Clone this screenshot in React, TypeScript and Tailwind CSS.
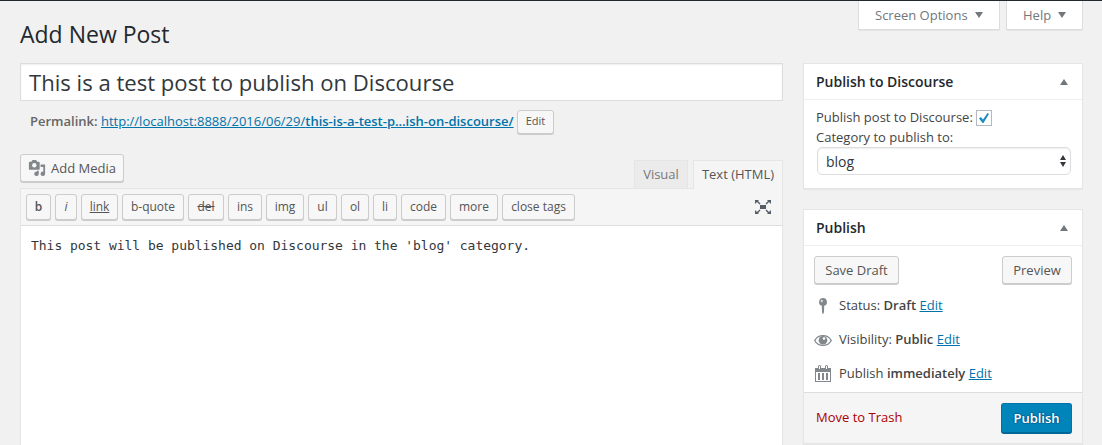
import type { ReactNode } from 'react';

const sans = "font-['Open_Sans','Noto_Sans',sans-serif]";

function Button({ className, children }: { className: string; children: ReactNode }) {
  return (
    <button
      type="button"
      className={`flex shrink-0 items-center justify-center whitespace-nowrap rounded-[3px] border border-[#ccc] bg-[#f7f7f7] text-[#555] shadow-[0_1px_0_#ccc] ${className}`}
    >
      {children}
    </button>
  );
}

const quicktags = [
  { label: 'b', className: 'w-[25px] font-semibold' },
  { label: 'i', className: 'w-[22px] italic' },
  { label: 'link', className: 'w-[37px] underline' },
  { label: 'b-quote', className: 'w-[62px]' },
  { label: 'del', className: 'w-[36px] line-through' },
  { label: 'ins', className: 'w-[34px]' },
  { label: 'img', className: 'w-[38px]' },
  { label: 'ul', className: 'w-[29px]' },
  { label: 'ol', className: 'w-[28px]' },
  { label: 'li', className: 'w-[24px]' },
  { label: 'code', className: 'w-[45px]' },
  { label: 'more', className: 'w-[48px]' },
  { label: 'close tags', className: 'w-[73px]' },
];

function MediaIcon() {
  return (
    <svg width="18" height="18" viewBox="0 0 20 20" fill="#82878c" className="shrink-0">
      <path
        fillRule="evenodd"
        d="M13 11V4c0-.55-.45-1-1-1h-1.670L9 1H5L3.670 3H2c-.55 0-1 .45-1 1v7c0 .55.45 1 1 1h10c.55 0 1-.45 1-1zM7 4.500a2.500 2.500 0 1 1 0 5 2.500 2.500 0 0 1 0-5zM14 6h5v10.500a2.500 2.500 0 1 1-2-2.450V9h-3zM10 14.050V13h2v3.500a2.500 2.500 0 1 1-2-2.450z"
      />
    </svg>
  );
}

function FullscreenIcon() {
  return (
    <svg width="16" height="14" viewBox="0 0 16 14" fill="#555d66" className="shrink-0">
      <path d="M5 5h6v4H5zM0 0h4L3 1l2.500 2.500-1 1L2 2 0 4zM16 0h-4l1 1-2.500 2.500 1 1L14 2l2 2zM0 14h4l-1-1 2.500-2.500-1-1L2 12l-2-2zM16 14h-4l1-1-2.500-2.500 1-1L14 12l2-2z" />
    </svg>
  );
}

function PinIcon() {
  return (
    <svg width="20" height="20" viewBox="0 0 20 20" className="shrink-0">
      <path fill="#82878c" d="M10 2a4 4 0 0 0-1.200 7.800l.2 6.200.7 2h.6l.7-2 .2-6.200A4 4 0 0 0 10 2z" />
      <circle cx="8.800" cy="5" r="1.200" fill="#d5d7d9" />
    </svg>
  );
}

function EyeIcon() {
  return (
    <svg width="20" height="20" viewBox="0 0 20 20" className="shrink-0">
      <path
        d="M1.700 10.500C3.500 7.300 6.500 5.700 10 5.700s6.500 1.600 8.300 4.800c-1.800 3.200-4.800 4.900-8.300 4.900s-6.500-1.700-8.300-4.900z"
        fill="none"
        stroke="#82878c"
        strokeWidth="1.300"
      />
      <circle cx="10" cy="10.200" r="4.300" fill="#82878c" />
      <circle cx="11" cy="8.500" r="1.300" fill="#fff" />
    </svg>
  );
}

function CalendarIcon() {
  return (
    <svg width="20" height="20" viewBox="0 0 20 20" className="shrink-0">
      <path
        fill="#82878c"
        fillRule="evenodd"
        d="M2 4h3V2.500a1.500 1.500 0 0 1 3 0V4h4V2.500a1.500 1.500 0 0 1 3 0V4h3v14H2zM6 2v3h1V2zM13 2v3h1V2zM3 8v9h14V8zM5 9h2v7H5zM9 9h2v7H9zM13 9h2v7h-2z"
      />
    </svg>
  );
}

function ScreenTab({ label, className }: { label: string; className: string }) {
  return (
    <div
      className={`flex h-[29px] items-center whitespace-nowrap border border-t-0 border-[#ddd] bg-white pl-4 text-[13px] text-[#72777c] shadow-[0_1px_1px_-1px_rgba(0,0,0,0.3)] ${className}`}
    >
      <span className="pt-px">{label}</span>
      <svg width="8" height="6" viewBox="0 0 8 6" className="ml-[7px]">
        <path d="M0 0h8L4 6z" fill="#72777c" />
      </svg>
    </div>
  );
}

function PanelHeader({ title }: { title: string }) {
  return (
    <div className="flex h-9 items-center justify-between border-b border-[#eee] pl-3 pr-[14px] text-[14px] font-semibold text-[#23282d]">
      {title}
      <svg width="8" height="6" viewBox="0 0 8 6">
        <path d="M0 6h8L4 0z" fill="#72777c" />
      </svg>
    </div>
  );
}

function StatusRow({ icon, label, value }: { icon: ReactNode; label: string; value: string }) {
  return (
    <div className="flex h-[34px] items-center gap-[6px] pl-[9px]">
      {icon}
      <span className="whitespace-nowrap">
        {label} <b className="font-semibold">{value}</b>{' '}
        <a className="text-[#0073aa] underline">Edit</a>
      </span>
    </div>
  );
}

export default function App() {
  return (
    <div
      className={`${sans} h-[445px] w-[1102px] overflow-hidden border-t border-[#23282d] bg-[#f1f1f1] text-[13px] text-[#444]`}
    >
      <div className="flex h-[62px] justify-between pl-5 pr-[19px]">
        <h1 className="pt-[18px] text-[23px] leading-[30px] text-[#23282d]">Add New Post</h1>
        <div className="flex gap-[6px]">
          <ScreenTab label="Screen Options" className="w-[142px]" />
          <ScreenTab label="Help" className="w-[77px]" />
        </div>
      </div>

      <div className="flex gap-5 pl-5">
        <main className="w-[763px] shrink-0">
          <div className="flex h-[38px] items-center border border-[#ddd] bg-white px-2 pt-px text-[22.1px] text-[#32373c] shadow-[inset_0_1px_2px_rgba(0,0,0,0.07)]">
            This is a test post to publish on Discourse
          </div>

          <div className="flex h-10 items-center pl-[10px] pt-px">
            <span className="w-[487px] shrink-0 whitespace-nowrap">
              <b className="font-semibold text-[#666]">Permalink:</b>{' '}
              <a className="text-[#0073aa] underline">
                http://localhost:8888/2016/06/29/
                <b className="font-semibold">this-is-a-test-p…ish-on-discourse/</b>
              </a>
            </span>
            <Button className="h-6 w-[37px] text-[11px]">Edit</Button>
          </div>

          <div className="flex h-[47px] items-end justify-between">
            <Button className="mb-[6px] h-7 w-[104px] gap-[5px] text-[13px]">
              <MediaIcon />
              <span className="pt-px">Add Media</span>
            </Button>
            <div className="flex items-end gap-[5px]">
              <div className="flex h-7 w-[54px] items-center justify-center border border-b-0 border-[#e5e5e5] bg-[#ebebeb] text-[13px] text-[#777]">
                Visual
              </div>
              <div className="-mb-px flex h-[29px] w-[90px] items-center justify-center whitespace-nowrap border border-b-0 border-[#e5e5e5] bg-[#f5f5f5] text-[13px] text-[#555]">
                Text (HTML)
              </div>
            </div>
          </div>

          <div className="h-[260px] border border-[#e5e5e5] bg-white">
            <div className="flex h-[37px] items-center justify-between border-b border-[#ddd] bg-[#f5f5f5] pl-[5px] pr-[11px]">
              <div className="flex gap-1">
                {quicktags.map((tag) => (
                  <Button key={tag.label} className={`h-[26px] text-[12px] ${tag.className}`}>
                    {tag.label}
                  </Button>
                ))}
              </div>
              <FullscreenIcon />
            </div>
            <div className="whitespace-nowrap px-[10px] pt-[10px] font-['DejaVu_Sans_Mono',monospace] text-[13px] leading-[19px] tracking-[-0.03px] text-[#32373c]">
              This post will be published on Discourse in the 'blog' category.
            </div>
          </div>
        </main>

        <aside className="flex w-[280px] shrink-0 flex-col gap-5">
          <section className="h-[126px] border border-[#e5e5e5] bg-white shadow-[0_1px_1px_rgba(0,0,0,0.04)]">
            <PanelHeader title="Publish to Discourse" />
            <div className="px-3 pt-2">
              <div className="flex h-[19px] items-center gap-[3px]">
                Publish post to Discourse:
                <span className="flex size-4 shrink-0 items-center justify-center border border-[#b4b9be] bg-white">
                  <svg width="12" height="12" viewBox="0 0 12 12">
                    <path d="M1 6.500 3 5l2 2.500L9.500 1 11 2 5.500 11H4.500z" fill="#1e8cbe" />
                  </svg>
                </span>
              </div>
              <div className="h-5 leading-5">Category to publish to:</div>
              <div className="ml-px flex h-7 w-[254px] items-center justify-between rounded-[5px] border border-[#ddd] bg-white pl-2 pr-1 text-[14px] text-[#32373c] shadow-[inset_0_1px_2px_rgba(0,0,0,0.07)]">
                blog
                <svg width="6" height="12" viewBox="0 0 6 12" fill="#32373c">
                  <path d="M0 5h6L3 0zM0 7h6l-3 5z" />
                </svg>
              </div>
            </div>
          </section>

          <section className="h-[235px] border border-[#e5e5e5] bg-white shadow-[0_1px_1px_rgba(0,0,0,0.04)]">
            <PanelHeader title="Publish" />
            <div className="flex justify-between px-[10px] pt-[10px]">
              <Button className="h-7 w-[85px] pt-px text-[13px]">Save Draft</Button>
              <Button className="h-7 w-[70px] pt-px text-[13px]">Preview</Button>
            </div>
            <div className="h-[108px] pt-[5px]">
              <StatusRow icon={<PinIcon />} label="Status:" value="Draft" />
              <StatusRow icon={<EyeIcon />} label="Visibility:" value="Public" />
              <StatusRow icon={<CalendarIcon />} label="Publish" value="immediately" />
            </div>
            <div className="flex h-[51px] items-center justify-between border-t border-[#ddd] bg-[#f5f5f5] pl-3 pr-[10px]">
              <a className="text-[#a00]">Move to Trash</a>
              <button
                type="button"
                className="flex h-[30px] w-[71px] items-center justify-center rounded-[3px] border border-[#0073aa] border-b-[#006799] bg-[#0085ba] pt-px font-semibold text-white shadow-[0_1px_0_#006799] [text-shadow:0_-1px_1px_#006799,1px_0_1px_#006799,0_1px_1px_#006799,-1px_0_1px_#006799]"
              >
                Publish
              </button>
            </div>
          </section>
        </aside>
      </div>
    </div>
  );
}
